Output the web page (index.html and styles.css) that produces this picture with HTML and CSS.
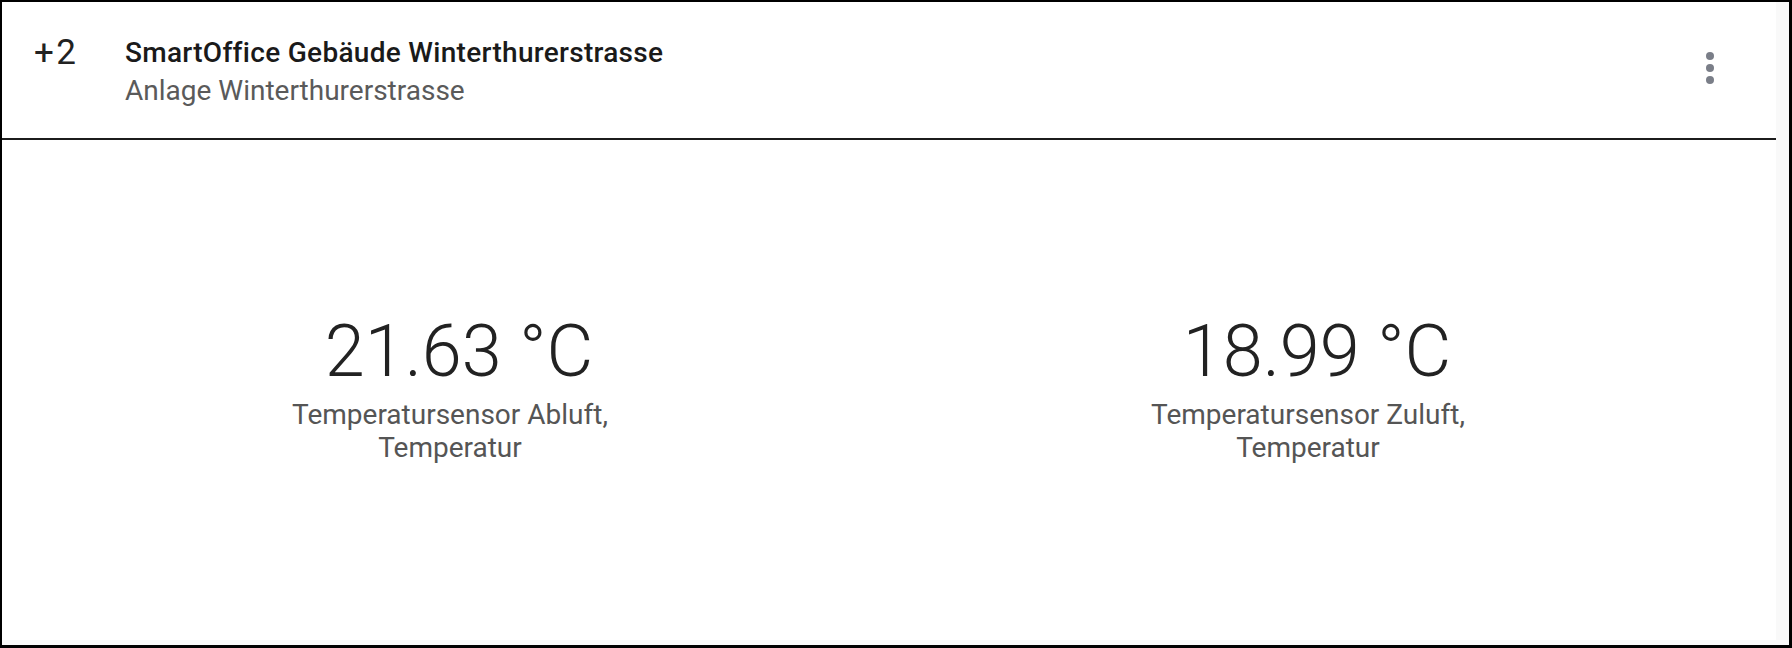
FILE: index.html
```html
<!DOCTYPE html>
<html lang="de">
<head>
<meta charset="utf-8">
<title>SmartOffice</title>
<link rel="stylesheet" href="styles.css">
</head>
<body>
<div class="frame">
  <div class="card">
    <header class="card-header">
      <div class="badge">+2</div>
      <div class="titles">
        <div class="title">SmartOffice Gebäude Winterthurerstrasse</div>
        <div class="subtitle">Anlage Winterthurerstrasse</div>
      </div>
      <button class="menu" aria-label="Mehr">
        <svg viewBox="0 0 24 24" width="48" height="48"><circle cx="12" cy="6" r="2"/><circle cx="12" cy="12" r="2"/><circle cx="12" cy="18" r="2"/></svg>
      </button>
    </header>
    <section class="card-body">
      <div class="metric">
        <div class="value">21.63 °C</div>
        <div class="label">Temperatursensor Abluft, Temperatur</div>
      </div>
      <div class="metric">
        <div class="value">18.99 °C</div>
        <div class="label">Temperatursensor Zuluft, Temperatur</div>
      </div>
    </section>
  </div>
</div>
</body>
</html>
```
FILE: styles.css
```css
html, body {
  margin: 0;
  padding: 0;
  height: 100%;
}
body {
  background: #000;
  font-family: Roboto, "Liberation Sans", sans-serif;
  overflow: hidden;
}
.frame {
  margin: 2px 3px 0 2px;
  height: 643px;
  background: #f9f9f9;
}
.card {
  width: 1774px;
  height: 638px;
  background: #fff;
  display: flex;
  flex-direction: column;
}
.card-header {
  height: 136px;
  border-bottom: 2px solid #1c1c1c;
  display: flex;
  align-items: center;
  padding: 0 42px 0 32px;
  box-sizing: content-box;
}
.badge {
  width: 91px;
  align-self: flex-start;
  margin-top: 31px;
  font-size: 35px;
  line-height: 40px;
  letter-spacing: 2.5px;
  color: #222;
  font-weight: 400;
}
.titles {
  flex: 1;
  padding-top: 4px;
}
.title {
  font-size: 28px;
  line-height: 38px;
  font-weight: 500;
  letter-spacing: 0.3px;
  color: #1a1a1a;
}
.subtitle {
  font-size: 28px;
  line-height: 38px;
  font-weight: 400;
  color: #5a5a5a;
}
.menu {
  border: 0;
  background: none;
  padding: 0;
  width: 48px;
  height: 48px;
  margin-top: -4px;
  fill: #7a7e88;
}
.menu svg { display: block; }
.card-body {
  flex: 1;
  display: grid;
  grid-template-columns: 1fr 1fr;
  align-items: center;
  padding: 0 39px 0 19px;
}
.metric {
  display: flex;
  flex-direction: column;
  align-items: center;
  text-align: center;
}
.value {
  font-size: 72px;
  line-height: 72px;
  font-weight: 300;
  color: #222;
  padding-left: 18px;
}
.label {
  margin-top: 10px;
  max-width: 360px;
  font-size: 28px;
  line-height: 33px;
  font-weight: 400;
  color: #555;
}
```
